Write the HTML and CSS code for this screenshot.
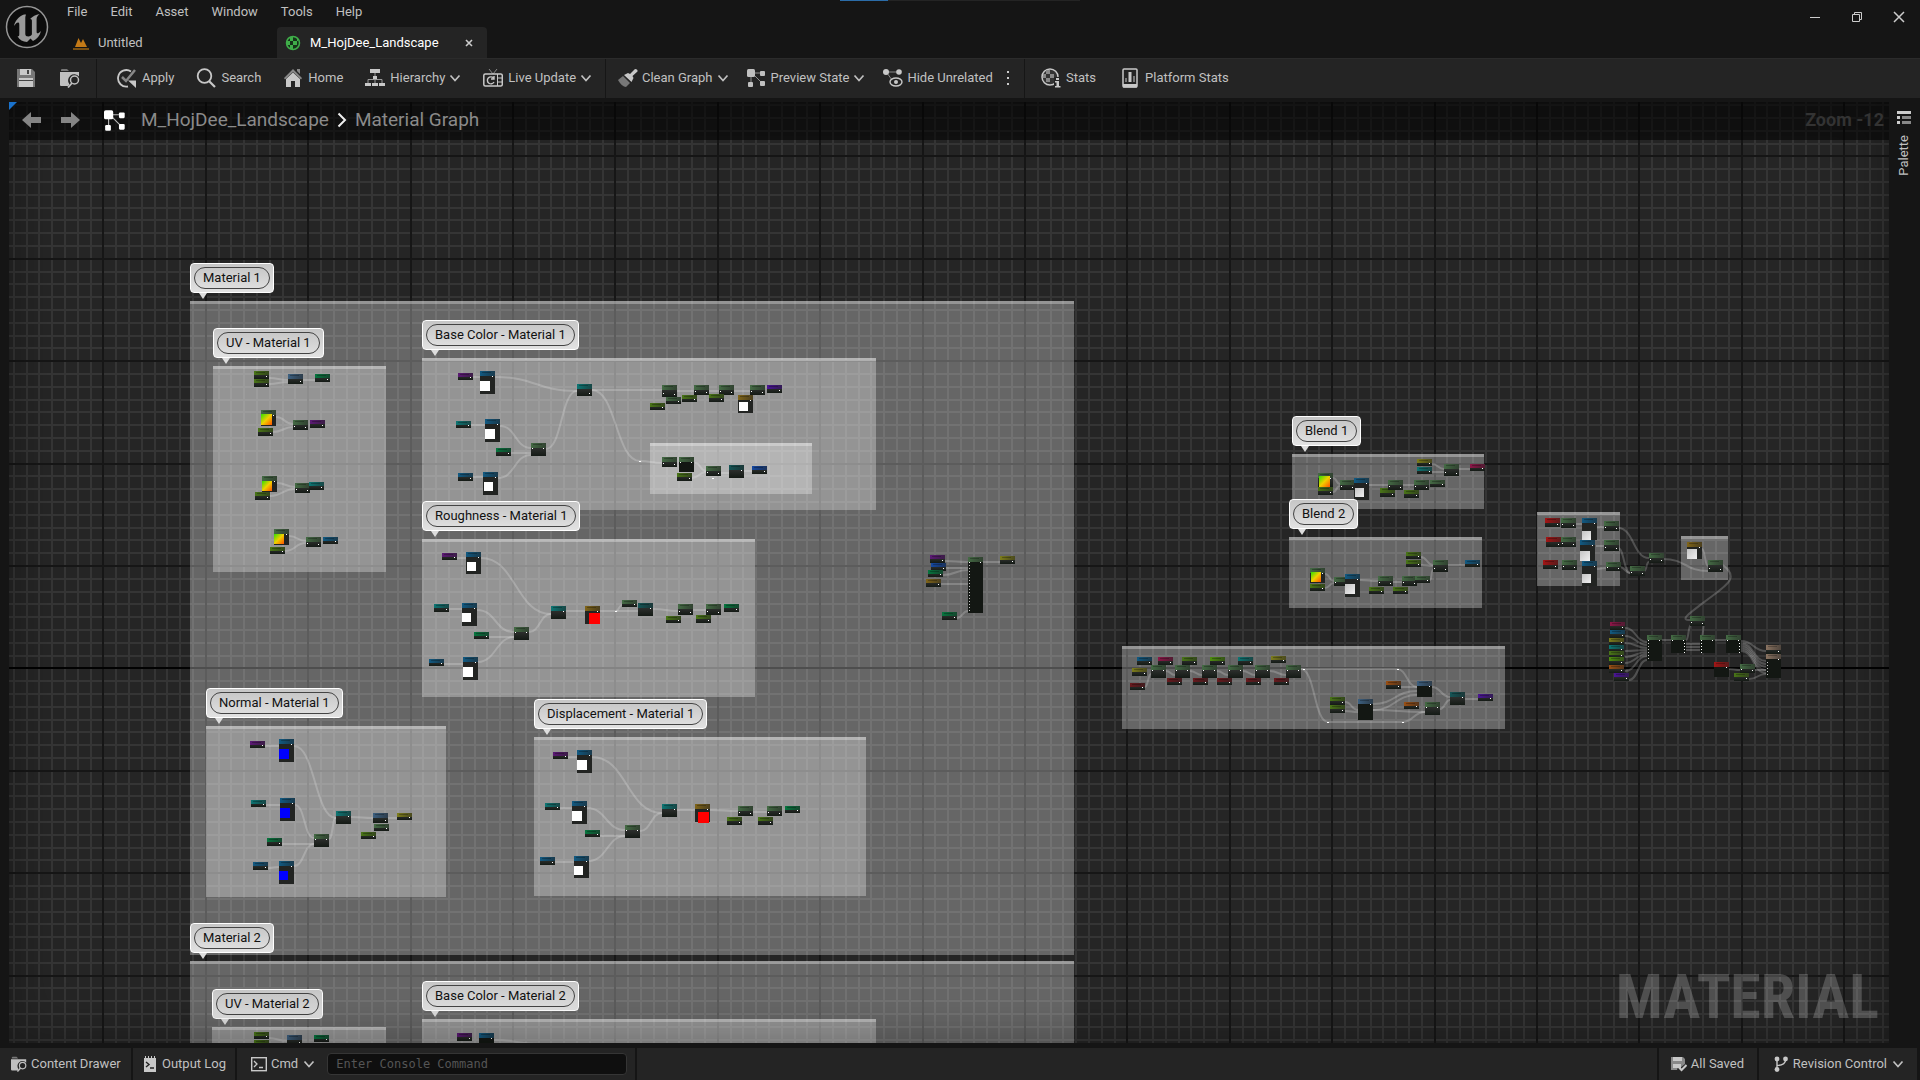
FILE: index.html
```html
<!DOCTYPE html>
<html lang="en">
<head>
<meta charset="utf-8">
<title>M_HojDee_Landscape</title>
<link rel="stylesheet" href="styles.css">
</head>
<body>
<svg class="defs" aria-hidden="true">
  <symbol id="chev" viewBox="0 0 12 12"><path d="M1.500 3.500L6 8.500l4.500-5" fill="none" stroke="currentColor" stroke-width="1.700"/></symbol>
  <symbol id="nodes" viewBox="0 0 20 20"><path d="M5 5h11M6 6l10 10M4 6v10" stroke="currentColor" fill="none" opacity=".7"/><rect x="0" y="1" width="8" height="8" rx="1.500" fill="currentColor"/><rect x="13" y="3" width="5" height="5" rx="1" fill="currentColor"/><rect x="13" y="13" width="5" height="5" rx="1" fill="currentColor"/><rect x="1" y="14" width="5" height="5" rx="1" fill="currentColor"/></symbol>
  <symbol id="browse" viewBox="0 0 20 20"><path d="M1 3V1.500Q1 1 2 1h5l2 2z" fill="#777"/><path d="M0 4h19v4.500a6 6 0 0 0-9.500 8L8 18H1q-1 0-1-1z" fill="currentColor"/><circle cx="14.500" cy="12" r="4" fill="none" stroke="currentColor" stroke-width="1.500"/><path d="M12 15l-4 4.500" stroke="currentColor" stroke-width="1.800"/></symbol>
</svg>

<header class="top">
  <svg class="logo" viewBox="0 0 44 54"><circle cx="22" cy="27" r="20.500" fill="#0c0c0c" stroke="#969696" stroke-width="1.500"/><path d="M19 14.500c-5 2-9 6-10 11.500 2-3 3.500-4 4.500-3.500.8.400.8 1.500.8 3v9c0 1.500-.6 2-1.800 1.800C14.500 40 18 42 22 42l3.500-3.500L28 41c4-2 7-5.500 8-10-2 2-3.200 2.600-3.800 2.200-.5-.3-.6-1-.6-2.200V19c0-2 1.500-4 3-5-4 .5-7 2.500-9.500 5 1.200-.2 1.800.6 1.800 1.800v13.500c0 1-2 2.200-3.600 2.200-2 0-3-.8-3-2.500V18.500c0-1.700.3-2.800.7-4z" fill="#9a9a9a"/></svg>
  <div class="bars">
    <nav class="menu"><button>File</button><button>Edit</button><button>Asset</button><button>Window</button><button>Tools</button><button>Help</button></nav>
    <div class="tabs">
      <button class="tab"><svg width="16" height="16" viewBox="0 0 16 16"><path d="M0 13h16v2H0z" fill="#7a5013"/><path d="M2 12L5.500 3 8 8l2-4 4 8z" fill="#c47a17"/></svg>Untitled</button>
      <div class="tab on"><svg width="16" height="16" viewBox="0 0 16 16"><circle cx="8" cy="8" r="6.500" fill="#16331a" stroke="#3fae49" stroke-width="1.500"/><path d="M5 2h3v4H5zM8 6h4v4H8zM2 6h3v4H2zM5 10h3v4H5zM12 4h1v2h-1z" fill="#3fae49"/></svg><span>M_HojDee_Landscape</span><button class="x" aria-label="Close tab"><svg width="8" height="8" viewBox="0 0 8 8"><path d="M1 1l6 6M7 1L1 7" stroke="#ccc" stroke-width="1.600"/></svg></button></div>
    </div>
  </div>
  <div class="progress"><i></i></div>
  <div class="win">
    <button aria-label="Minimize"><svg width="12" height="12" viewBox="0 0 12 12"><path d="M1 6.500h10" stroke="#ccc"/></svg></button>
    <button aria-label="Restore"><svg width="12" height="12" viewBox="0 0 12 12"><path d="M1.500 3.500h7v7h-7zM3.500 3V1.500h7v7H9" fill="none" stroke="#ccc"/></svg></button>
    <button aria-label="Close"><svg width="12" height="12" viewBox="0 0 12 12"><path d="M1 1l10 10M11 1L1 11" stroke="#ccc" stroke-width="1.500"/></svg></button>
  </div>
</header>

<div class="toolbar">
  <div class="group files">
    <button aria-label="Save"><svg class="ic" viewBox="0 0 20 20"><path d="M1 1h15l3 3v15H1z" fill="#777"/><path d="M4 1h11v6H4zM3 10h14v9H3z" fill="#c8c8c8"/><path d="M11 2h2v4h-2zM3 12h14v1H3z" fill="#444"/></svg></button>
    <button aria-label="Browse to asset"><svg class="ic"><use href="#browse"/></svg></button>
  </div>
  <div class="group main">
    <button><svg class="ic" viewBox="0 0 20 20"><path d="M14 3.500A8.300 8.300 0 1 0 11 18.500" fill="none" stroke="#c8c8c8" stroke-width="1.800"/><path d="M5 9l4 4 9-11" fill="none" stroke="#888" stroke-width="2.500"/><path d="M11 12.500h8V20z" fill="#c8c8c8"/></svg>Apply</button>
    <button><svg class="ic" viewBox="0 0 20 20"><circle cx="8.500" cy="8" r="6.800" fill="none" stroke="#c8c8c8" stroke-width="1.800"/><path d="M13 13l6 6" stroke="#c8c8c8" stroke-width="2.200"/></svg>Search</button>
    <button><svg class="ic" viewBox="0 0 20 20"><path d="M1 10l9-9 9 9-1 1.500-8-7.500-8 7.500zM14 1h3v5l-3-3z" fill="#888"/><path d="M3 11l7-6.500 7 6.500v8h-5v-6H8v6H3z" fill="#c8c8c8"/></svg>Home</button>
    <button><svg class="ic" viewBox="0 0 20 20"><path d="M10 5v6M3 16v-4.500h14V16M10 11v5" fill="none" stroke="#999"/><path d="M5 1h10v4H5zM8 8h4v3H8zM0 15h6v3H0zM7 15h6v3H7zM14 15h6v3h-6z" fill="#c8c8c8"/></svg>Hierarchy<svg class="cv"><use href="#chev"/></svg></button>
    <button><svg class="ic" viewBox="0 0 20 20"><path d="M6 1l4 5 4-5" fill="none" stroke="#888"/><rect x=".8" y="6" width="18.500" height="12" rx="1.500" fill="none" stroke="#c8c8c8" stroke-width="1.500"/><path d="M14.500 6v12M15 10h4M15 14h4" stroke="#c8c8c8"/><path d="M10.500 10A3.500 3.500 0 1 0 11 14M11 8v3H8" fill="none" stroke="#c8c8c8" stroke-width="1.400"/></svg>Live Update<svg class="cv"><use href="#chev"/></svg></button>
  </div>
  <div class="group view">
    <button><svg class="ic" viewBox="0 0 20 20"><path d="M0 12l5-4 7 7-4 4q-4 0-8-7z" fill="#777"/><path d="M6 7l4-2 2 1 5-5q3 0 2.500 2.500L14.500 8l1 2-2 4z" fill="#c8c8c8"/></svg>Clean Graph<svg class="cv"><use href="#chev"/></svg></button>
    <button><svg class="ic"><use href="#nodes"/></svg>Preview State<svg class="cv"><use href="#chev"/></svg></button>
    <button><svg class="ic" viewBox="0 0 20 20"><path d="M3 4h13M4 5l5 7" stroke="#888" fill="none"/><circle cx="3" cy="4" r="3" fill="#c8c8c8"/><circle cx="16" cy="4" r="2.800" fill="#c8c8c8"/><ellipse cx="13" cy="14" rx="6" ry="4" fill="none" stroke="#c8c8c8" stroke-width="1.400"/><circle cx="13" cy="14" r="2" fill="#c8c8c8"/></svg>Hide Unrelated</button>
    <button aria-label="More options" class="more"><svg width="4" height="16" viewBox="0 0 4 16"><path d="M1 1h2v2H1zM1 7h2v2H1zM1 13h2v2H1z" fill="#ccc"/></svg></button>
  </div>
  <div class="group stats">
    <button><svg class="ic" viewBox="0 0 20 20"><circle cx="9" cy="9" r="8" fill="#333" stroke="#c8c8c8" stroke-width="1.500"/><path d="M5 2h4v4H5zM9 6h4v4H9zM2 6h3v4H2zM5 10h4v4H5z" fill="#888"/><path d="M13 9h7v11h-7z" fill="#242424"/><path d="M15 10h3v2h-3zM14 13h4v5h1.500v1.500H14V18h1.500v-3.500H14z" fill="#c8c8c8"/></svg>Stats</button>
    <button><svg class="ic" viewBox="0 0 20 20"><rect x="3" y="1" width="14" height="18" rx="1" fill="none" stroke="#c8c8c8" stroke-width="1.500"/><path d="M3 16h14v3.500H3z" fill="#c8c8c8"/><path d="M5 10h2v4H5zM13 8h2v6h-2z" fill="#777"/><path d="M8.500 4h3v10h-3z" fill="#c8c8c8"/></svg>Platform Stats</button>
  </div>
</div>

<main class="work">
  <section class="graph" id="graph">
    <svg class="layer" id="grid"></svg>
    <div class="comments" id="comments"></div>
    <svg class="layer" id="items"></svg>
    <div class="labels" id="labels"></div>
    <div class="shade"></div>
    <div class="crumbs">
      <button aria-label="Back"><svg width="20" height="18" viewBox="0 0 20 18"><path d="M0 9l9-8v5h10v6H9v5z" fill="#858585"/></svg></button>
      <button aria-label="Forward"><svg width="20" height="18" viewBox="0 0 20 18"><path d="M20 9l-9-8v5H1v6h10v5z" fill="#858585"/></svg></button>
      <svg class="gi"><use href="#nodes"/></svg>
      <a href="#">M_HojDee_Landscape</a>
      <svg width="10" height="16" viewBox="0 0 10 16"><path d="M1.500 1.500L8 8l-6.500 6.500" fill="none" stroke="#eee" stroke-width="2"/></svg>
      <a href="#">Material Graph</a>
      <span class="zoom">Zoom -12</span>
    </div>
    <div class="corner"></div>
    <div class="mark">MATERIAL</div>
  </section>
  <aside class="side"><button><svg width="14" height="14" viewBox="0 0 14 14"><path d="M0 0h14v3H0zM0 5h3v3H0zM0 10h3v3H0z" fill="#ccc"/><path d="M5 5h9v3H5zM5 10h9v3H5z" fill="#888"/></svg><span>Palette</span></button></aside>
</main>

<footer class="status">
  <button class="s1"><svg class="si"><use href="#browse"/></svg>Content Drawer</button>
  <button class="s2"><svg class="si" viewBox="0 0 16 16"><path d="M2 2h1V0h1v2h2V0h1v2h2V0h1v2h2V0h1v2h1v14H2z" fill="#c8c8c8"/><path d="M4 6l3 2.500L4 11M8 12h4" fill="none" stroke="#222" stroke-width="1.400"/></svg>Output Log</button>
  <div class="s3">
    <button><svg class="si" viewBox="0 0 16 16"><rect x=".7" y="1.700" width="14.600" height="13" fill="none" stroke="#c8c8c8" stroke-width="1.400"/><path d="M3 5l3 3-3 3M8 11.500h4" fill="none" stroke="#c8c8c8" stroke-width="1.300"/></svg>Cmd<svg class="cv"><use href="#chev"/></svg></button>
    <input type="text" aria-label="Console command" placeholder="Enter Console Command">
  </div>
  <div class="fill"></div>
  <button class="s4"><svg class="si" viewBox="0 0 16 16"><path d="M0 1h12l2 2v5l-5 4-2-1-1 3H0z" fill="#888"/><path d="M2 1h9v4H2zM2 8h8v4H2z" fill="#c8c8c8"/><path d="M8 11.500l2.500 2.500L15.500 9" fill="none" stroke="#c8c8c8" stroke-width="2"/></svg>All Saved</button>
  <button class="s5"><svg class="si" viewBox="0 0 16 16"><path d="M4 4v9M12.500 4q0 5-8.500 5.500" fill="none" stroke="#c8c8c8" stroke-width="1.400"/><circle cx="4" cy="3" r="2.400" fill="#c8c8c8"/><circle cx="12.500" cy="3" r="2.400" fill="#c8c8c8"/><circle cx="4" cy="13.500" r="2.400" fill="#c8c8c8"/></svg>Revision Control<svg class="cv"><use href="#chev"/></svg></button>
</footer>
<script src="graph.js"></script>
</body>
</html>
```
FILE: styles.css
```css
* { box-sizing: border-box; }
body { margin: 0; height: 100vh; display: flex; flex-direction: column; background: #151515; color: #c0c0c0; font: 13px/16px Roboto, "Liberation Sans", sans-serif; overflow: hidden; }
button { background: none; border: 0; padding: 0; margin: 0; font: inherit; color: inherit; display: flex; align-items: center; white-space: nowrap; }
svg { flex: none; display: block; }
.defs { position: absolute; width: 0; height: 0; }
.cv { width: 12px; height: 12px; }

.top { height: 58px; display: flex; position: relative; }
.logo { width: 44px; height: 54px; margin: 0 5px; }
.bars { display: flex; flex-direction: column; justify-content: space-between; flex: 1; }
.menu { display: flex; gap: 23px; padding: 4px 0 0 13px; }
.tabs { display: flex; height: 31px; }
.tab { display: flex; align-items: center; width: 223px; gap: 9px; padding-left: 19px; }
.tab.on { width: 210px; padding: 0 14px 0 8px; background: #242424; color: #fff; border-radius: 4px 4px 0 0; }
.x { margin-left: auto; }
.progress { position: absolute; left: 50%; top: 0; width: 240px; height: 1px; margin-left: -120px; background: #242424; }
.progress i { display: block; width: 20%; height: 1px; background: #2b6ca8; }
.win { display: flex; gap: 30px; padding: 11px 15px 0 0; align-items: flex-start; }

.toolbar { height: 40px; background: #242424; display: flex; border-top: 1px solid #2b2b2b; }
.group { display: flex; align-items: center; border-right: 1px solid #161616; padding-bottom: 2px; }
.group button { gap: 4px; }
.ic { width: 20px; height: 20px; }
.files { width: 97px; gap: 24px; padding-left: 16px; }
.main { width: 509px; gap: 22px; padding-left: 20px; }
.main .ic, .stats .ic { margin-right: 1px; }
.view { width: 419px; gap: 18px; padding-left: 12px; }
.more { margin-left: -5px; }
.stats { gap: 24px; padding-left: 16px; border: 0; }

.work { flex: 1; min-height: 0; display: flex; padding: 4px 0 5px 9px; }
.graph { flex: 1; position: relative; overflow: hidden; background: #252525; }
.layer, .comments, .labels, .shade { position: absolute; inset: 0; width: 100%; height: 100%; }
.shade { box-shadow: inset 0 0 50px rgba(0,0,0,.35); }
.minor { stroke: #353535; stroke-width: 2; }
.major { stroke: #161616; stroke-width: 2; }
.axis { stroke: #020202; stroke-width: 2; }
.comment { position: absolute; background: rgba(255,255,255,.3); border-top: 3px solid rgba(255,255,255,.3); }
.label { position: absolute; height: 30px; padding: 3px; border: 1px solid #fff; border-radius: 4px; background: linear-gradient(#c6c6c6, #e2e2e2); }
.label span { display: block; height: 22px; padding: 0 8px; border: 1px solid #444; border-radius: 11px; line-height: 20px; color: #111; white-space: nowrap; background: linear-gradient(#c8c8c8, #dedede); }
.label::after { content: ""; position: absolute; left: 8px; top: 29px; border: 4px solid transparent; border-top: 6px solid #ddd; border-bottom: 0; }
.wire { fill: none; stroke: #fff; stroke-opacity: .2; stroke-width: 2; }
.crumbs { position: absolute; left: 0; right: 0; top: 0; height: 38px; display: flex; align-items: center; padding: 0 5px 2px 13px; background: rgba(0,0,0,.55); font-size: 19px; line-height: 22px; }
.crumbs button { margin-right: 18px; }
.crumbs a { color: #8a8a8a; text-decoration: none; margin: 0 8px; }
.gi { width: 23px; height: 23px; color: #fff; margin: 0 6px 0 6px; }
.zoom { margin-left: auto; font-size: 18px; font-weight: 700; color: #333; }
.corner { position: absolute; left: 0; top: 0; border: 4px solid #1a72cc; border-right-color: transparent; border-bottom-color: transparent; }
.mark { position: absolute; right: 10px; bottom: 14px; font: 700 62px/64px "Roboto Condensed", Roboto, sans-serif; color: rgba(255,255,255,.2); }
.side { width: 31px; padding: 9px 0 0 7px; }
.side button { flex-direction: column; gap: 10px; }
.side span { writing-mode: vertical-rl; transform: rotate(180deg); }

.status { height: 32px; display: flex; background: #242424; border-right: 3px solid #151515; }
.status button { gap: 4px; }
.status > * { border-right: 2px solid #151515; }
.si { width: 16px; height: 16px; }
.status .s1 { width: 133px; padding-left: 11px; }
.status .s2 { width: 104px; padding-left: 9px; }
.s3 { display: flex; align-items: center; width: 400px; padding-left: 14px; }
.s3 .cv, .s5 .cv { margin-left: 1px; }
.s3 input { margin-left: 12px; width: 300px; height: 22px; padding: 0 8px; background: #0f0f0f; border: 1px solid #353535; border-radius: 4px; color: #ccc; font: 12px "DejaVu Sans Mono", monospace; }
.s3 input::placeholder { color: #555; }
.fill { flex: 1; }
.status .s4 { width: 100px; padding-left: 12px; }
.status .s5 { padding: 0 13px 0 14px; border: 0; }
```
FILE: graph.js
```js
// Graph space is shifted against the viewport by this offset.
const OX = 9, OY = 102;
const NS = 'http://www.w3.org/2000/svg';
function add(parent, tag, attrs) {
  const e = document.createElementNS(NS, tag);
  for (const k in attrs) e.setAttribute(k, attrs[k]);
  parent.appendChild(e);
  return e;
}

// Background grid: eight cells to each heavy line.
const graph = document.getElementById('graph');
const grid = document.getElementById('grid');
const W = graph.clientWidth, H = graph.clientHeight, CELL = 64 / 5;
let minor = '', major = '';
for (let i = 0; i * CELL < W + CELL; i++) {
  const x = Math.round(1 - OX + i * CELL);
  if (i % 8) minor += `M${x} 0V${H}`; else major += `M${x} 0V${H}`;
}
for (let i = 0; i * CELL < H + 5 * CELL; i++) {
  const y = Math.round(54 - OY + i * CELL);
  if (i % 8) minor += `M0 ${y}H${W}`; else major += `M0 ${y}H${W}`;
}
add(grid, 'path', { d: minor, class: 'minor' });
add(grid, 'path', { d: major, class: 'major' });
add(grid, 'path', { d: `M0 ${668 - OY}H${W}`, class: 'axis' });

// Comment boxes: left, top, right, bottom, title.
const comments = [
  [190, 301, 1074, 955, 'Material 1'], [213, 366, 386, 572, 'UV - Material 1'],
  [422, 358, 876, 510, 'Base Color - Material 1'], [650, 443, 812, 494],
  [422, 539, 755, 697, 'Roughness - Material 1'], [206, 726, 446, 897, 'Normal - Material 1'],
  [534, 737, 866, 896, 'Displacement - Material 1'], [190, 961, 1074, 1200, 'Material 2'],
  [212, 1027, 386, 1150, 'UV - Material 2'], [422, 1019, 876, 1150, 'Base Color - Material 2'],
  [1292, 454, 1484, 509, 'Blend 1'], [1289, 537, 1482, 608, 'Blend 2'],
  [1122, 646, 1505, 729], [1537, 512, 1620, 586], [1681, 536, 1728, 580]
];
for (const [l, t, r, b, title] of comments) {
  const c = document.createElement('div');
  c.className = 'comment';
  c.style.cssText = `left:${l - OX}px;top:${t - OY}px;width:${r - l}px;height:${b - t}px`;
  document.getElementById('comments').appendChild(c);
  if (!title) continue;
  const tag = document.createElement('div'), s = document.createElement('span');
  tag.className = 'label';
  tag.style.cssText = `left:${l - OX}px;top:${t - 38 - OY}px`;
  s.textContent = title;
  tag.appendChild(s);
  document.getElementById('labels').appendChild(tag);
}

const colors = { p: '#5c1a75', v: '#4a1594', t: '#0e7674', T: '#165556', b: '#125a82', B: '#1548a0', g: '#07763f', o: '#4a7518', O: '#4f8f10', d: '#456b45', s: '#3d6080', y: '#80651a', Y: '#7d7d1c', r: '#a31616', R: '#681a1e', m: '#8c1748', n: '#9a5015', k: '#8a7462' };
const swatches = { w: '#fff', l: 'url(#cloud)', R: '#f00', B: '#00f', u: 'url(#uv)' };

// Nodes: colour, x, y, height, swatch, swatch offset x, y, size.
const nodes = `
o 254 371 8;o 254 379 8;s 288 374 10;g 315 374 8;d 261 410 16 u 0 4 11;o 258 428 8;d 293 420 10;p 310 420 8
d 262 476 16 u 0 5 10;o 255 492 8;d 295 483 10;t 309 482 8;d 274 529 16 u 0 5 10;o 270 547 7;d 306 537 10;b 323 537 7
p 458 373 7;b 480 371 23 w 0 10 10;t 577 384 12;t 456 421 7;b 485 419 23 w 0 10 10;g 496 448 8;d 531 443 13;b 458 473 8;b 483 472 23 w 1 10 9
d 662 385 12;d 694 385 10;d 719 385 10;d 750 385 10;v 767 385 8;d 666 397 7;o 682 395 7;o 709 394 8;y 738 395 18 w 1 7 9;o 650 403 7
d 662 457 10;d 679 457 15;o 677 473 8;d 706 466 10;T 729 465 13;B 752 466 8
p 930 555 8;B 931 563 8;g 928 570 7;y 926 579 8;g 942 612 8;d 968 557 56;Y 1000 556 8
p 442 553 7;b 466 552 22 w 1 10 9;t 434 604 8;b 462 603 23 w 0 10 9;g 474 632 7;d 514 627 13;b 429 659 7;b 463 657 23 w 0 10 10
t 551 606 13;y 585 606 18 R 4 7 11;d 622 600 7;T 638 603 13;d 678 604 11;o 666 616 7;o 696 615 8;d 706 604 11;g 724 604 8
p 250 741 7;b 279 739 23 B 0 10 10;t 251 800 7;b 280 798 23 B 0 10 10;g 267 838 8;d 314 834 13;b 253 862 8;b 279 861 23 B 0 10 9
t 336 811 13;s 373 813 10;Y 397 813 7;d 374 824 7;o 361 832 7
p 553 752 7;b 577 750 23 w 0 10 10;t 545 803 7;b 572 801 23 w 0 10 10;g 585 830 7;d 625 825 13;b 540 857 8;b 574 856 22 w 0 10 9
t 662 804 13;y 695 804 18 R 3 8 11;d 738 806 10;o 727 817 8;o 758 817 8;d 767 806 10;g 785 806 7
o 254 1032 7;o 254 1040 8;s 287 1035 10;g 314 1035 7;p 457 1033 8;b 479 1033 20
d 1318 473 14 u 1 3 11;o 1318 487 8;d 1340 480 10;b 1354 478 22 l 1 10 9;o 1380 488 9;d 1388 480 10;o 1404 490 8;d 1414 480 10;d 1430 480 7
Y 1417 459 7;t 1417 467 7;d 1444 464 12;m 1470 464 7
d 1310 568 15 u 1 4 10;o 1310 584 7;d 1334 577 9;b 1345 574 23 l 0 10 10;o 1369 587 7;d 1378 576 10;o 1393 587 7;d 1402 576 10;d 1415 576 7
o 1406 552 7;o 1406 560 7;d 1433 560 12;b 1465 560 7
b 1137 657 8;m 1158 657 8;o 1182 657 8;O 1210 657 8;t 1238 657 8;Y 1271 656 7;Y 1132 668 8
d 1151 665 13;d 1175 665 13;d 1202 665 13;d 1228 665 13;d 1255 665 13;d 1286 665 13
R 1130 683 7;R 1167 678 7;R 1193 678 7;R 1217 678 7;R 1246 678 7;R 1274 678 7
o 1330 697 8;o 1330 705 8;s 1358 699 21;n 1386 681 8;n 1404 702 7;s 1417 681 16;d 1425 702 13;T 1450 692 13;v 1478 694 7
r 1545 518 9;d 1561 518 10;b 1582 518 22 l 0 13 9;d 1604 521 10;r 1546 537 10;d 1561 537 10;b 1580 540 21 l 0 11 10;d 1604 540 11
r 1543 560 9;d 1562 560 10;b 1582 561 25 l 0 13 9;d 1606 562 9;d 1630 566 10;d 1649 553 10
y 1687 542 17 l 0 7 10;d 1708 560 12
m 1610 622 8;b 1610 630 8;Y 1609 638 7;t 1609 645 7;o 1609 651 7;O 1609 657 8;n 1609 665 8;v 1614 673 8
d 1647 635 26;d 1671 635 18;d 1700 635 18;d 1726 635 18;d 1690 616 10;r 1714 662 15;d 1740 664 9;o 1734 673 8;k 1766 645 9;k 1766 654 24`;

// Wires: start x, y, end x, y.
const wires = `
269 378 288 380;269 384 288 382;303 380 315 380;276 417 293 424;273 432 293 427;277 483 295 487;270 496 295 489;289 536 306 541;285 551 306 543
473 377 480 377;495 377 577 391;471 425 485 425;500 426 531 448;511 453 531 453;473 477 483 477;498 478 531 455;546 449 577 391
592 390 662 390;592 390 640 461;640 461 662 463;677 391 694 391;709 391 719 391;734 391 750 391;695 463 706 471;692 478 706 472;721 473 729 473;744 471 752 471
945 561 968 562;946 568 968 568;943 575 968 570;941 584 968 584;957 618 968 611;983 562 1000 562
457 558 466 558;481 558 551 614;449 609 462 609;477 610 514 632;489 637 514 637;444 664 463 664;478 662 514 637;529 632 551 614;566 611 585 611;600 611 638 611;616 611 622 605;653 609 678 611;693 610 706 610
265 746 279 746;294 746 336 818;266 805 280 805;295 805 314 838;282 844 314 844;268 868 279 867;294 866 314 844;329 839 336 818;351 817 373 818;388 818 397 818
568 757 577 757;592 757 662 813;560 808 572 808;587 808 625 830;600 836 625 836;555 862 574 862;589 861 625 836;640 831 662 813;677 810 695 810;710 810 738 811;753 812 767 812
269 1038 287 1041;494 1040 540 1044
1333 478 1340 484;1333 492 1340 486;1369 485 1388 485;1403 485 1414 485;1432 464 1444 469;1432 472 1444 472;1459 469 1470 469
1325 574 1334 581;1325 588 1334 583;1360 580 1378 581;1393 582 1402 582;1421 557 1433 565;1421 565 1433 566;1430 580 1433 570;1448 565 1465 565
1145 687 1151 674;1166 671 1175 675;1190 671 1202 675;1217 671 1228 675;1243 671 1255 675;1270 671 1286 675
1301 669 1397 669;1397 669 1417 687;1301 669 1328 722;1328 722 1402 722;1402 722 1425 712;1345 702 1358 710;1345 711 1358 712;1373 704 1417 691;1373 710 1417 695;1373 710 1425 712;1401 687 1417 687;1432 687 1450 697;1440 709 1450 700;1465 699 1478 699
1618 528 1649 558;1618 548 1630 573;1620 567 1630 573;1644 571 1649 562;1663 559 1708 571;1576 524 1582 524;1596 527 1604 527;1596 546 1604 546;1596 569 1606 568;1702 549 1708 566
1625 628 1647 642;1625 636 1647 645;1625 643 1647 648;1625 651 1647 650;1625 657 1647 652;1625 663 1647 654;1625 671 1647 656;1629 680 1647 660
1662 640 1671 640;1686 644 1700 644;1686 647 1700 647;1686 650 1700 650;1686 640 1691 625;1705 622 1701 640;1715 640 1726 640
1741 641 1766 651;1741 643 1766 661;1741 645 1766 664;1741 647 1766 667;1741 649 1766 670;1741 651 1766 673;1729 669 1740 670;1755 670 1766 670;1749 679 1766 674`;

const svg = document.getElementById('items');
svg.innerHTML = `<defs>
<linearGradient id="body" x2="0" y2="1"><stop stop-color="#3c3c3c"/><stop offset="1" stop-color="#141a15"/></linearGradient>
<linearGradient id="dim" x2="1" y2="0"><stop stop-color="#111" stop-opacity="0"/><stop offset="1" stop-color="#222" stop-opacity=".55"/></linearGradient>
<linearGradient id="cloud" x2="1" y2="1"><stop stop-color="#c4c4c4"/><stop offset="1" stop-color="#f0f0f0"/></linearGradient>
<linearGradient id="uv" x2="1" y2="1"><stop stop-color="#30e000"/><stop offset=".5" stop-color="#f0d000"/><stop offset="1" stop-color="#ff5000"/></linearGradient></defs>`;
const root = add(svg, 'g', { transform: `translate(${-OX} ${-OY})` });
for (const w of wires.trim().split(/[;\n]/)) {
  const [a, b, c, d] = w.split(' ').map(Number), m = Math.round((c - a) / 2);
  add(root, 'path', { class: 'wire', d: `M${a} ${b}C${a + m} ${b} ${c - m} ${d} ${c} ${d}` });
}
// The long wire loops back under its target node.
add(root, 'path', { class: 'wire', d: 'M1723 565C1740 578 1727 585 1707 600S1680 620 1690 620' });
for (const n of nodes.trim().split(/[;\n]/)) {
  const [k, x, y, h, s, sx, sy, size] = n.split(' ').map((v, i) => i === 0 || i === 4 ? v : Number(v));
  const head = h > 8 ? 5 : 4;
  add(root, 'rect', { x, y, width: 15, height: h, fill: h > 14 ? (s ? '#222422' : '#131713') : 'url(#body)' });
  add(root, 'rect', { x, y, width: 15, height: head, fill: colors[k] });
  add(root, 'rect', { x, y, width: 15, height: head, fill: 'url(#dim)' });
  add(root, 'rect', { x: x + 2, y: y + 1, width: 9, height: 1, fill: '#000', opacity: .25 });
  add(root, 'rect', { x: x + 12, y: y + (h > 12 ? 5 : h - 3), width: 1, height: 1, fill: '#fff' });
  if (k === 'd' && h > 8 || h === 56) add(root, 'rect', { x: x + 1, y: y + (h > 12 ? 5 : h - 4), width: 1, height: 1, fill: '#fff' });
  if (h === 56 || h === 26 || h === 24)
    for (let j = 8; j < h - 1; j += 3) add(root, 'rect', { x: x + 1, y: y + j, width: 1, height: 1, fill: '#ccc' });
  if (h === 18 && !s)
    for (let j = 8; j < h; j += 3) add(root, 'rect', { x: x + (x === 1700 ? 1 : 13), y: y + j, width: 1, height: 1, fill: '#fff' });
  if (s) add(root, 'rect', { x: x + sx, y: y + sy, width: size, height: size, fill: swatches[s] });
}
// Reroute knots.
for (const [x, y] of [[639, 461], [615, 611], [1303, 669], [1397, 669], [1327, 722], [1402, 722], [712, 478]])
  add(root, 'rect', { x, y, width: 2, height: 1, fill: '#fff' });
```
